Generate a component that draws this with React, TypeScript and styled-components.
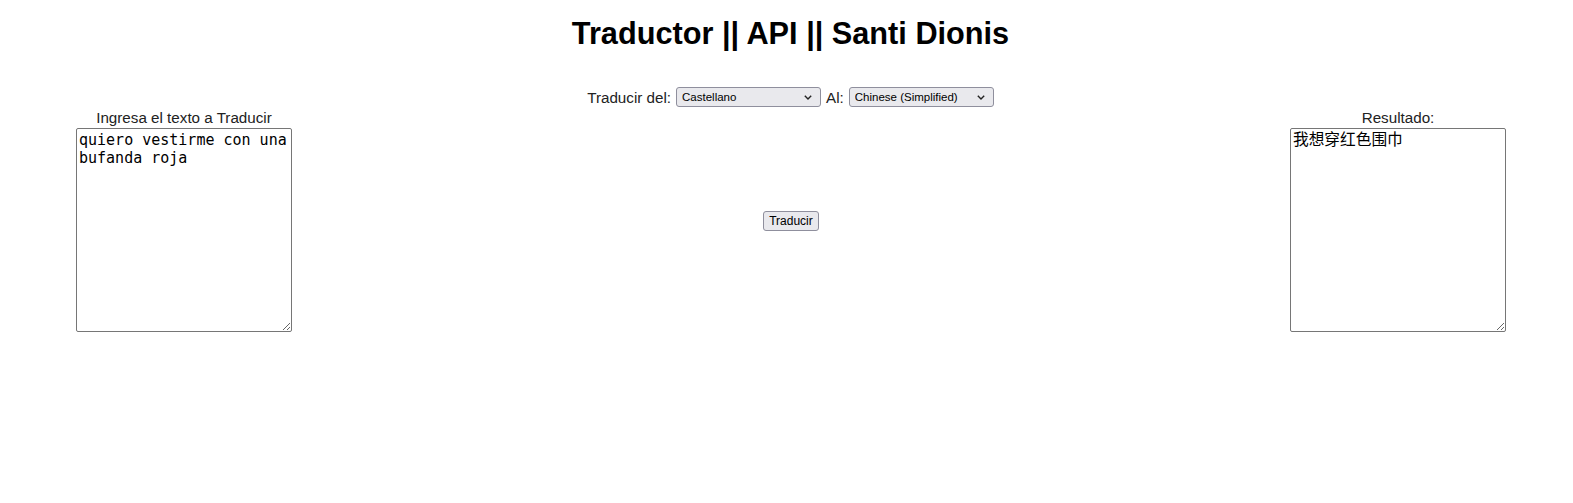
import React, { useState } from "react";
import styled, { createGlobalStyle } from "styled-components";

const GlobalStyle = createGlobalStyle`
    body {
        margin: 8px;
        background: #ffffff;
        font-family: "Liberation Sans", Arial, sans-serif;
        font-size: 15.2px;
        color: #222222;
    }
`;

const Title = styled.h1`
    margin: 8px 0 35px;
    padding-left: 8px;
    text-align: center;
    font-size: 30.7px;
    font-weight: bold;
    color: #000000;
`;

const LangBar = styled.div`
    display: flex;
    justify-content: center;
    align-items: center;
    gap: 5px;
    height: 20px;
    padding-left: 8px;
`;

const SelectWrap = styled.span`
    position: relative;
    display: inline-flex;
`;

const LangSelect = styled.select`
    appearance: none;
    width: 145px;
    height: 20px;
    padding: 0 20px 0 5px;
    font-family: "Liberation Sans", Arial, sans-serif;
    font-size: 11.5px;
    color: #000000;
    background: #e9e9ed;
    border: 1px solid #8f8f9d;
    border-radius: 3px;
`;

const Chevron = styled.svg`
    position: absolute;
    right: 9px;
    top: 8px;
    width: 8px;
    height: 5px;
    pointer-events: none;
`;

const Workspace = styled.div`
    display: flex;
    justify-content: space-between;
    align-items: center;
    padding: 2px 59px 0 68px;
`;

const Column = styled.div`
    display: flex;
    flex-direction: column;
    align-items: center;
`;

const Label = styled.label`
    line-height: 18px;
    height: 19px;
`;

const TextBox = styled.textarea<{ $cjk?: boolean }>`
    box-sizing: border-box;
    width: 216px;
    height: 204px;
    padding: 2px;
    font-family: "DejaVu Sans Mono", "Noto Sans CJK SC", monospace;
    font-size: ${(p) => (p.$cjk ? "15.7px" : "15px")};
    line-height: 18px;
    color: #000000;
    border: 1px solid #767676;
    border-radius: 2px;
    resize: both;
`;

const TranslateButton = styled.button`
    width: 56px;
    height: 20px;
    padding: 0;
    font-family: "Liberation Sans", Arial, sans-serif;
    font-size: 12px;
    color: #000000;
    background: #e9e9ed;
    border: 1px solid #8f8f9d;
    border-radius: 3px;
`;

const LANGUAGES = ["Castellano", "English", "Français", "Português", "Italiano", "Deutsch"];
const TARGETS = ["Chinese (Simplified)", "English", "Français", "Português", "Italiano", "Deutsch"];

const LanguagePicker: React.FC<{ value: string; options: string[]; onChange: (v: string) => void }> = ({
    value,
    options,
    onChange,
}) => (
    <SelectWrap>
        <LangSelect value={value} onChange={(e) => onChange(e.target.value)}>
            {options.map((l) => (
                <option key={l}>{l}</option>
            ))}
        </LangSelect>
        <Chevron viewBox="0 0 8 5">
            <path d="M0.8 0.8 L4 4 L7.2 0.8" fill="none" stroke="#222" strokeWidth="1.4" />
        </Chevron>
    </SelectWrap>
);

const App: React.FC = () => {
    const [source, setSource] = useState("quiero vestirme con una bufanda roja");
    const [from, setFrom] = useState(LANGUAGES[0]);
    const [to, setTo] = useState(TARGETS[0]);

    return (
        <>
            <GlobalStyle />
            <Title>Traductor || API || Santi Dionis</Title>
            <LangBar>
                <span>Traducir del:</span>
                <LanguagePicker value={from} options={LANGUAGES} onChange={setFrom} />
                <span>Al:</span>
                <LanguagePicker value={to} options={TARGETS} onChange={setTo} />
            </LangBar>
            <Workspace>
                <Column>
                    <Label>Ingresa el texto a Traducir</Label>
                    <TextBox value={source} onChange={(e) => setSource(e.target.value)} />
                </Column>
                <TranslateButton>Traducir</TranslateButton>
                <Column>
                    <Label>Resultado:</Label>
                    <TextBox $cjk readOnly value="我想穿红色围巾" />
                </Column>
            </Workspace>
        </>
    );
};

export default App;
